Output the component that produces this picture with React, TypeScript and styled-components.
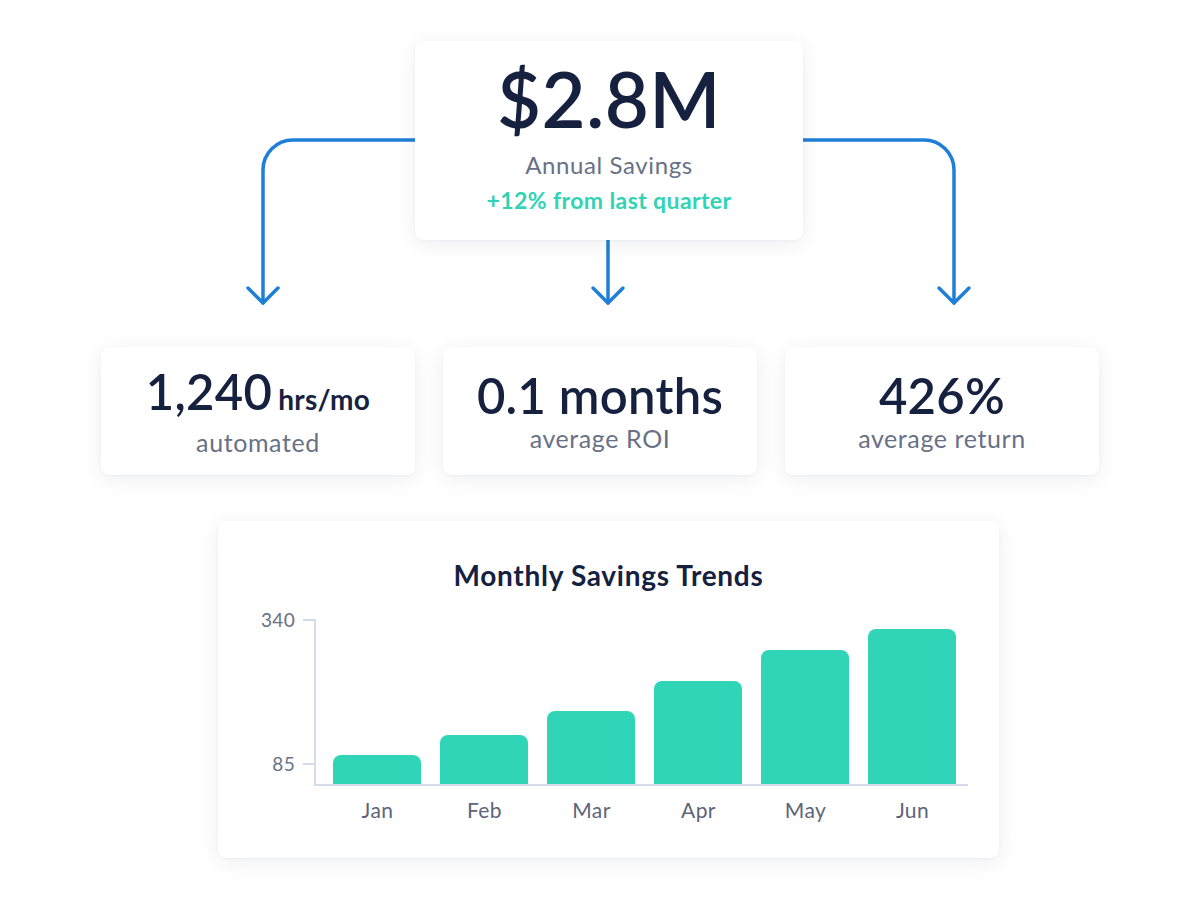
import React from "react";
import styled, { createGlobalStyle } from "styled-components";

const GlobalStyle = createGlobalStyle`
  html, body {
    margin: 0;
    padding: 0;
    background: #ffffff;
  }
  body {
    font-family: Lato, "Open Sans", "Liberation Sans", sans-serif;
    color: #15213f;
  }
`;

const Page = styled.main`
  width: 1200px;
  height: 900px;
  box-sizing: border-box;
  padding-top: 41px;
  display: flex;
  flex-direction: column;
  align-items: center;
`;

const FlowArea = styled.section`
  position: relative;
  width: 1200px;
  height: 306px;
  display: flex;
  justify-content: center;
`;

const Connectors = styled.svg`
  position: absolute;
  top: 0;
  left: 0;
  width: 1200px;
  height: 306px;
  pointer-events: none;
`;

const Card = styled.div`
  position: relative;
  background: #ffffff;
  border-radius: 8px;
  box-shadow: 0 4px 22px rgba(20, 30, 60, 0.07), 0 1px 3px rgba(20, 30, 60, 0.04);
  box-sizing: border-box;
`;

const HeroCard = styled(Card)`
  width: 388px;
  height: 199px;
  margin-left: 18px;
  display: flex;
  flex-direction: column;
  align-items: center;
  padding-top: 13px;
`;

const HeroValue = styled.div`
  font-size: 76px;
  font-weight: 600;
  line-height: 90px;
  letter-spacing: 0.5px;
  color: #15213f;
`;

const HeroLabel = styled.div`
  margin-top: 6px;
  font-size: 24px;
  line-height: 30px;
  letter-spacing: 0.6px;
  color: #687186;
`;

const HeroDelta = styled.div`
  margin-top: 5px;
  font-size: 23px;
  font-weight: 700;
  line-height: 30px;
  letter-spacing: 0.4px;
  color: #31d3b5;
`;

const StatsRow = styled.section`
  display: grid;
  grid-template-columns: repeat(3, 314px);
  gap: 28px;
`;

const StatCard = styled(Card)`
  height: 128px;
  display: flex;
  flex-direction: column;
  align-items: center;
  justify-content: center;
  padding-bottom: 2px;
`;

const StatValue = styled.div`
  display: flex;
  align-items: baseline;
  gap: 6px;
  font-size: 49px;
  font-weight: 600;
  line-height: 56px;
  letter-spacing: 0.3px;
  color: #15213f;
`;

const StatUnit = styled.span`
  font-size: 28px;
  font-weight: 700;
  letter-spacing: 0.3px;
`;

const StatLabel = styled.div`
  font-size: 25px;
  line-height: 30px;
  letter-spacing: 0.6px;
  color: #687186;
`;

const ChartCard = styled(Card)`
  width: 781px;
  height: 337px;
  margin-top: 46px;
  margin-left: 17px;
  padding-top: 37px;
  display: flex;
  flex-direction: column;
`;

const ChartTitle = styled.h2`
  margin: 0;
  text-align: center;
  font-size: 28px;
  font-weight: 700;
  line-height: 34px;
  letter-spacing: 0.7px;
  color: #15213f;
`;

const ChartBody = styled.div`
  margin-top: 27px;
  display: grid;
  grid-template-columns: 96px 654px;
  grid-template-rows: 167px auto;
`;

const YAxis = styled.div`
  position: relative;
`;

const Tick = styled.div`
  position: absolute;
  right: 0;
  display: flex;
  align-items: center;
  gap: 8px;
  transform: translateY(50%);
  font-size: 19px;
  line-height: 20px;
  letter-spacing: 0.3px;
  color: #687186;

  &::after {
    content: "";
    width: 11px;
    height: 2.5px;
    background: #d5dce8;
  }
`;

const Plot = styled.div`
  display: flex;
  align-items: flex-end;
  gap: 19px;
  padding-left: 17px;
  border-left: 2.5px solid #d5dce8;
  border-bottom: 2.5px solid #d5dce8;
`;

const Bar = styled.div`
  width: 88px;
  flex-shrink: 0;
  background: #30d5b8;
  border-radius: 8px 8px 0 0;
`;

const MonthRow = styled.div`
  grid-column: 2;
  display: flex;
  gap: 19px;
  padding-left: 19.5px;
  padding-top: 11px;
`;

const Month = styled.div`
  width: 88px;
  text-align: center;
  font-size: 21px;
  line-height: 26px;
  letter-spacing: 0.4px;
  color: #5d6579;
`;

const stats = [
  { value: "1,240", unit: "hrs/mo", label: "automated" },
  { value: "0.1 months", label: "average ROI" },
  { value: "426%", label: "average return" },
];

const months = [
  { name: "Jan", value: 97 },
  { name: "Feb", value: 133 },
  { name: "Mar", value: 175 },
  { name: "Apr", value: 228 },
  { name: "May", value: 283 },
  { name: "Jun", value: 320 },
];

const ticks = [340, 85];

// value -> px above the x axis
const scale = (v: number) => 22 + (v - 85) * (144 / 255);

const BLUE = "#1f7fd6";

function ConnectorLines() {
  return (
    <Connectors viewBox="0 0 1200 306">
      <g
        fill="none"
        stroke={BLUE}
        strokeWidth={3.5}
        strokeLinecap="round"
        strokeLinejoin="round"
      >
        <path d="M 420 99 H 293 A 30 30 0 0 0 263 129 V 262" />
        <path d="M 248 247 L 263 262 L 278 247" />
        <path d="M 798 99 H 924 A 30 30 0 0 1 954 129 V 262" />
        <path d="M 939 247 L 954 262 L 969 247" />
        <path d="M 608 195 V 262" />
        <path d="M 593 247 L 608 262 L 623 247" />
      </g>
    </Connectors>
  );
}

export default function App() {
  return (
    <>
      <GlobalStyle />
      <Page>
        <FlowArea>
          <ConnectorLines />
          <HeroCard>
            <HeroValue>$2.8M</HeroValue>
            <HeroLabel>Annual Savings</HeroLabel>
            <HeroDelta>+12% from last quarter</HeroDelta>
          </HeroCard>
        </FlowArea>

        <StatsRow>
          {stats.map((s) => (
            <StatCard key={s.label}>
              <StatValue>
                {s.value}
                {s.unit && <StatUnit>{s.unit}</StatUnit>}
              </StatValue>
              <StatLabel>{s.label}</StatLabel>
            </StatCard>
          ))}
        </StatsRow>

        <ChartCard>
          <ChartTitle>Monthly Savings Trends</ChartTitle>
          <ChartBody>
            <YAxis>
              {ticks.map((t) => (
                <Tick key={t} style={{ bottom: scale(t) }}>
                  {t}
                </Tick>
              ))}
            </YAxis>
            <Plot>
              {months.map((m) => (
                <Bar key={m.name} style={{ height: scale(m.value) }} />
              ))}
            </Plot>
            <MonthRow>
              {months.map((m) => (
                <Month key={m.name}>{m.name}</Month>
              ))}
            </MonthRow>
          </ChartBody>
        </ChartCard>
      </Page>
    </>
  );
}
